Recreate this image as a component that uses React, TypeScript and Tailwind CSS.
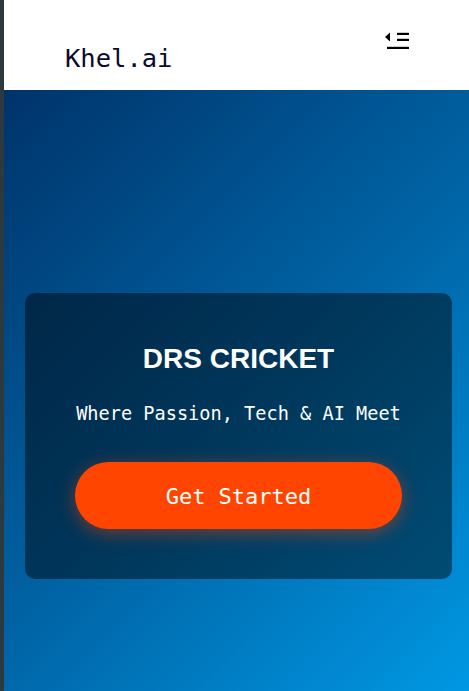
import React from "react";

export default function App() {
  return (
    <div className="flex w-full min-h-[691px] bg-[#2c3a3f]">
      <div className="w-[4px] shrink-0 bg-[#2c3a3f]" />
      <div className="flex-1 flex flex-col">
        <header className="h-[90px] bg-white relative shrink-0">
          <div
            className="absolute left-[61px] top-[40px] text-[25.5px] leading-[37.5px] text-[#0b0a2b]"
            style={{ fontFamily: '"DejaVu Sans Mono", monospace' }}
          >
            Khel.ai
          </div>
          <button className="absolute left-[380px] top-[30px] w-[26px] h-[21px]" aria-label="menu">
            <svg width="26" height="21" viewBox="0 0 26 21" fill="#000">
              <polygon points="1,7 6,2.5 6,11.5" />
              <rect x="13" y="2.8" width="12" height="2.2" />
              <rect x="13" y="8.8" width="12" height="2.2" />
              <rect x="3" y="16.8" width="22" height="2.2" />
            </svg>
          </button>
        </header>
        <main className="h-[691px] flex items-center bg-[linear-gradient(135deg,#00336a_0%,#0066a8_50%,#00a1ee_100%)]">
          <div className="ml-[21px] w-[427px] rounded-[10px] bg-black/45 pt-[50px] pb-[50px] px-[50px] flex flex-col items-center">
            <h1
              className="text-[28px] leading-[32px] font-bold text-white"
              style={{ fontFamily: '"Liberation Sans", Arial, sans-serif' }}
            >
              DRS CRICKET
            </h1>
            <p
              className="mt-[25px] text-[18.6px] leading-[28px] text-white"
              style={{ fontFamily: '"DejaVu Sans Mono", monospace' }}
            >
              Where Passion, Tech &amp; AI Meet
            </p>
            <button
              className="mt-[34px] w-[327px] h-[67px] pt-[3px] rounded-full bg-[#ff4500] text-white text-[22px] shadow-[0_4px_18px_rgba(255,69,0,0.45)]"
              style={{ fontFamily: '"DejaVu Sans Mono", monospace' }}
            >
              Get Started
            </button>
          </div>
        </main>
      </div>
    </div>
  );
}
